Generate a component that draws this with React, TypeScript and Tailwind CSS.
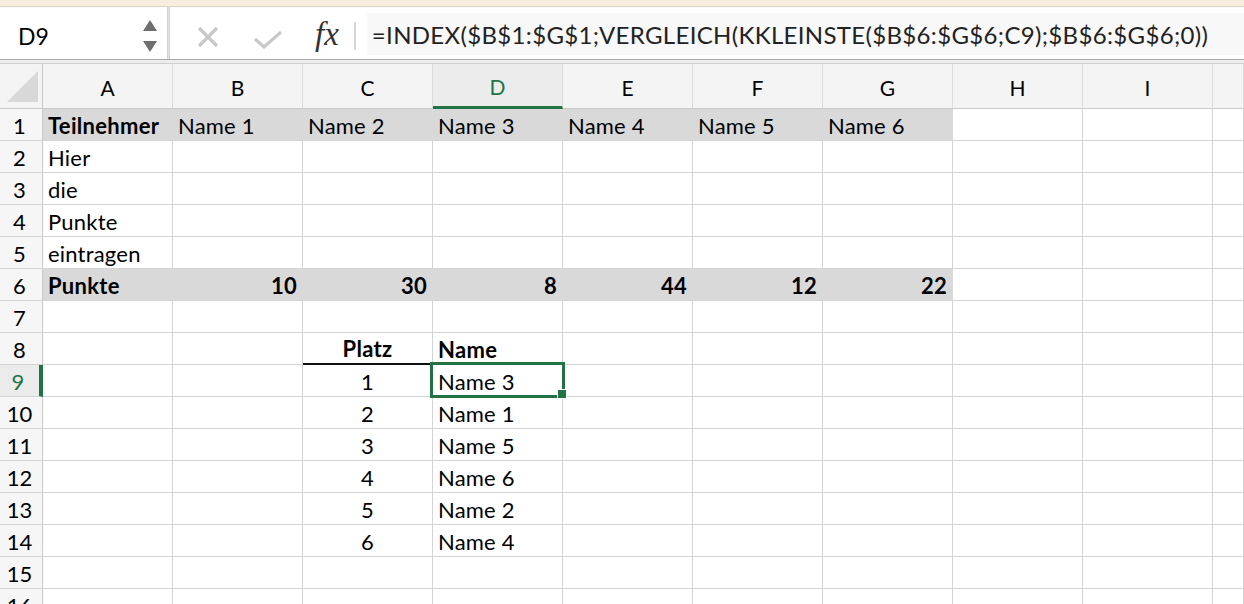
import React from "react";

const COLS = ["A", "B", "C", "D", "E", "F", "G", "H", "I", ""];
const FONT = "font-['Lato','Noto_Sans',sans-serif]";

type CellDef = { t?: string; b?: boolean; align?: "l" | "r" | "c"; gray?: boolean; underline?: boolean };

function rowData(r: number): CellDef[] {
  const cells: CellDef[] = COLS.map(() => ({}));
  if (r === 1) {
    cells[0] = { t: "Teilnehmer", b: true, gray: true };
    for (let i = 1; i <= 6; i++) cells[i] = { t: `Name ${i}`, gray: true };
  }
  if (r >= 2 && r <= 5) cells[0] = { t: ["Hier", "die", "Punkte", "eintragen"][r - 2] };
  if (r === 6) {
    cells[0] = { t: "Punkte", b: true, gray: true };
    const v = [10, 30, 8, 44, 12, 22];
    for (let i = 1; i <= 6; i++) cells[i] = { t: String(v[i - 1]), b: true, align: "r", gray: true };
  }
  if (r === 8) {
    cells[2] = { t: "Platz", b: true, align: "c", underline: true };
    cells[3] = { t: "Name", b: true };
  }
  if (r >= 9 && r <= 14) {
    const names = [3, 1, 5, 6, 2, 4];
    cells[2] = { t: String(r - 8), align: "c" };
    cells[3] = { t: `Name ${names[r - 9]}` };
  }
  return cells;
}

function Cell({ c, sel }: { c: CellDef; sel?: boolean }) {
  const align = c.align === "r" ? "justify-end" : c.align === "c" ? "justify-center" : "justify-start";
  return (
    <div
      className={`relative h-[32px] flex items-center px-[5px] text-[22px] text-black leading-none whitespace-nowrap overflow-visible ${align} ${
        c.gray ? "bg-[#d9d9d9] border-r border-r-[#d9d9d9] border-b border-b-[#d4d4d4]" : "border-r border-b border-[#d4d4d4]"
      } ${c.b ? "font-bold tracking-[0.3px]" : "tracking-[0.2px]"} ${c.underline ? "border-b-2 border-b-[#111111]" : ""}`}
    >
      <span className="pt-[2px]">{c.t}</span>
      {sel && (
        <div className="absolute z-10 left-[-3px] top-[-3px] right-[-3px] bottom-[-2px] border-[3px] border-[#217346] pointer-events-none">
          <div className="absolute right-[-5px] bottom-[-4px] w-[10px] h-[10px] bg-[#217346] border border-white" />
        </div>
      )}
    </div>
  );
}

export default function App() {
  const rows = Array.from({ length: 16 }, (_, i) => i + 1);
  return (
    <div className={`w-[1244px] h-[604px] overflow-hidden bg-white ${FONT}`}>
      <div className="h-[7px] bg-[#f7eedf] border-b border-[#ddd4c2]" />
      <div className="h-[53px] flex border-b border-[#a9a9a9]">
        <div className="w-[167px] flex items-center pl-[18px] pt-[6px] relative">
          <span className="text-[23px] text-black">D9</span>
          <div className="ml-auto mr-[10px] flex flex-col gap-[10px] pt-[0px]">
            <svg width="14" height="11" viewBox="0 0 14 11"><polygon points="7,0 14,11 0,11" fill="#6f6f6f" /></svg>
            <svg width="14" height="11" viewBox="0 0 14 11"><polygon points="0,0 14,0 7,11" fill="#6f6f6f" /></svg>
          </div>
        </div>
        <div className="w-[3px] bg-[#e4e4e4] border-x border-[#d2d2d2]" />
        <div className="flex items-center pt-[6px] flex-1">
          <div className="w-[27px]" />
          <svg width="22" height="22" viewBox="0 0 22 22" className="mt-[2px]">
            <path d="M2 2 L20 20 M20 2 L2 20" stroke="#c8c8c8" strokeWidth="3.2" strokeLinecap="butt" />
          </svg>
          <div className="w-[35px]" />
          <svg width="28" height="18" viewBox="0 0 28 18" className="mt-[7px]">
            <path d="M1 8 L10 16 L27 1" stroke="#c8c8c8" strokeWidth="3.2" fill="none" />
          </svg>
          <div className="w-[33px]" />
          <span className="font-['Liberation_Serif',serif] italic text-[33px] text-[#333333] leading-none -mt-[3px]">fx</span>
          <div className="w-[15px]" />
          <div className="w-[2px] h-[28px] bg-[#d6d6d6]" />
          <div className="ml-[11px] flex-1 self-stretch mb-[4px] bg-[#f8f8f8] flex items-center pl-[5px] pt-[2px]">
            <span className="text-[24px] text-[#222222] whitespace-nowrap tracking-[0.33px]">
              =INDEX($B$1:$G$1;VERGLEICH(KKLEINSTE($B$6:$G$6;C9);$B$6:$G$6;0))
            </span>
          </div>
        </div>
      </div>
      <div className="h-[4px] bg-[#ececec] border-b border-[#cfcfcf]" />
      <div className="grid grid-cols-[43px_repeat(9,130px)_31px]">
        <div className="h-[45px] bg-[#f4f4f4] border-r border-b border-[#c9c9c9] relative">
          <svg width="31" height="31" viewBox="0 0 31 31" className="absolute left-[7px] top-[7px]">
            <polygon points="31,0 31,31 0,31" fill="#d8d8d8" />
          </svg>
        </div>
        {COLS.map((c, i) => (
          <div
            key={c + i}
            className={`h-[45px] flex items-center justify-center text-[21px] pt-[4px] border-r border-r-[#dcdcdc] ${
              c === "D"
                ? "bg-[#ececec] text-[#217346] border-b-[3px] border-b-[#217346]"
                : "bg-[#f4f4f4] text-black border-b border-b-[#c9c9c9]"
            }`}
          >
            {c}
          </div>
        ))}
        {rows.map((r) => {
          const cells = rowData(r);
          return (
            <React.Fragment key={r}>
              <div
                className={`h-[32px] flex items-center justify-center pr-[3px] pt-[2px] text-[22px] border-b border-[#d4d4d4] ${
                  r === 9
                    ? "bg-[#ebebeb] text-[#217346] border-r-[4px] border-r-[#217346]"
                    : "bg-[#f6f6f6] text-black border-r border-r-[#c9c9c9]"
                }`}
              >
                {r}
              </div>
              {cells.map((c, i) => (
                <Cell key={i} c={c} sel={r === 9 && i === 3} />
              ))}
            </React.Fragment>
          );
        })}
      </div>
    </div>
  );
}
